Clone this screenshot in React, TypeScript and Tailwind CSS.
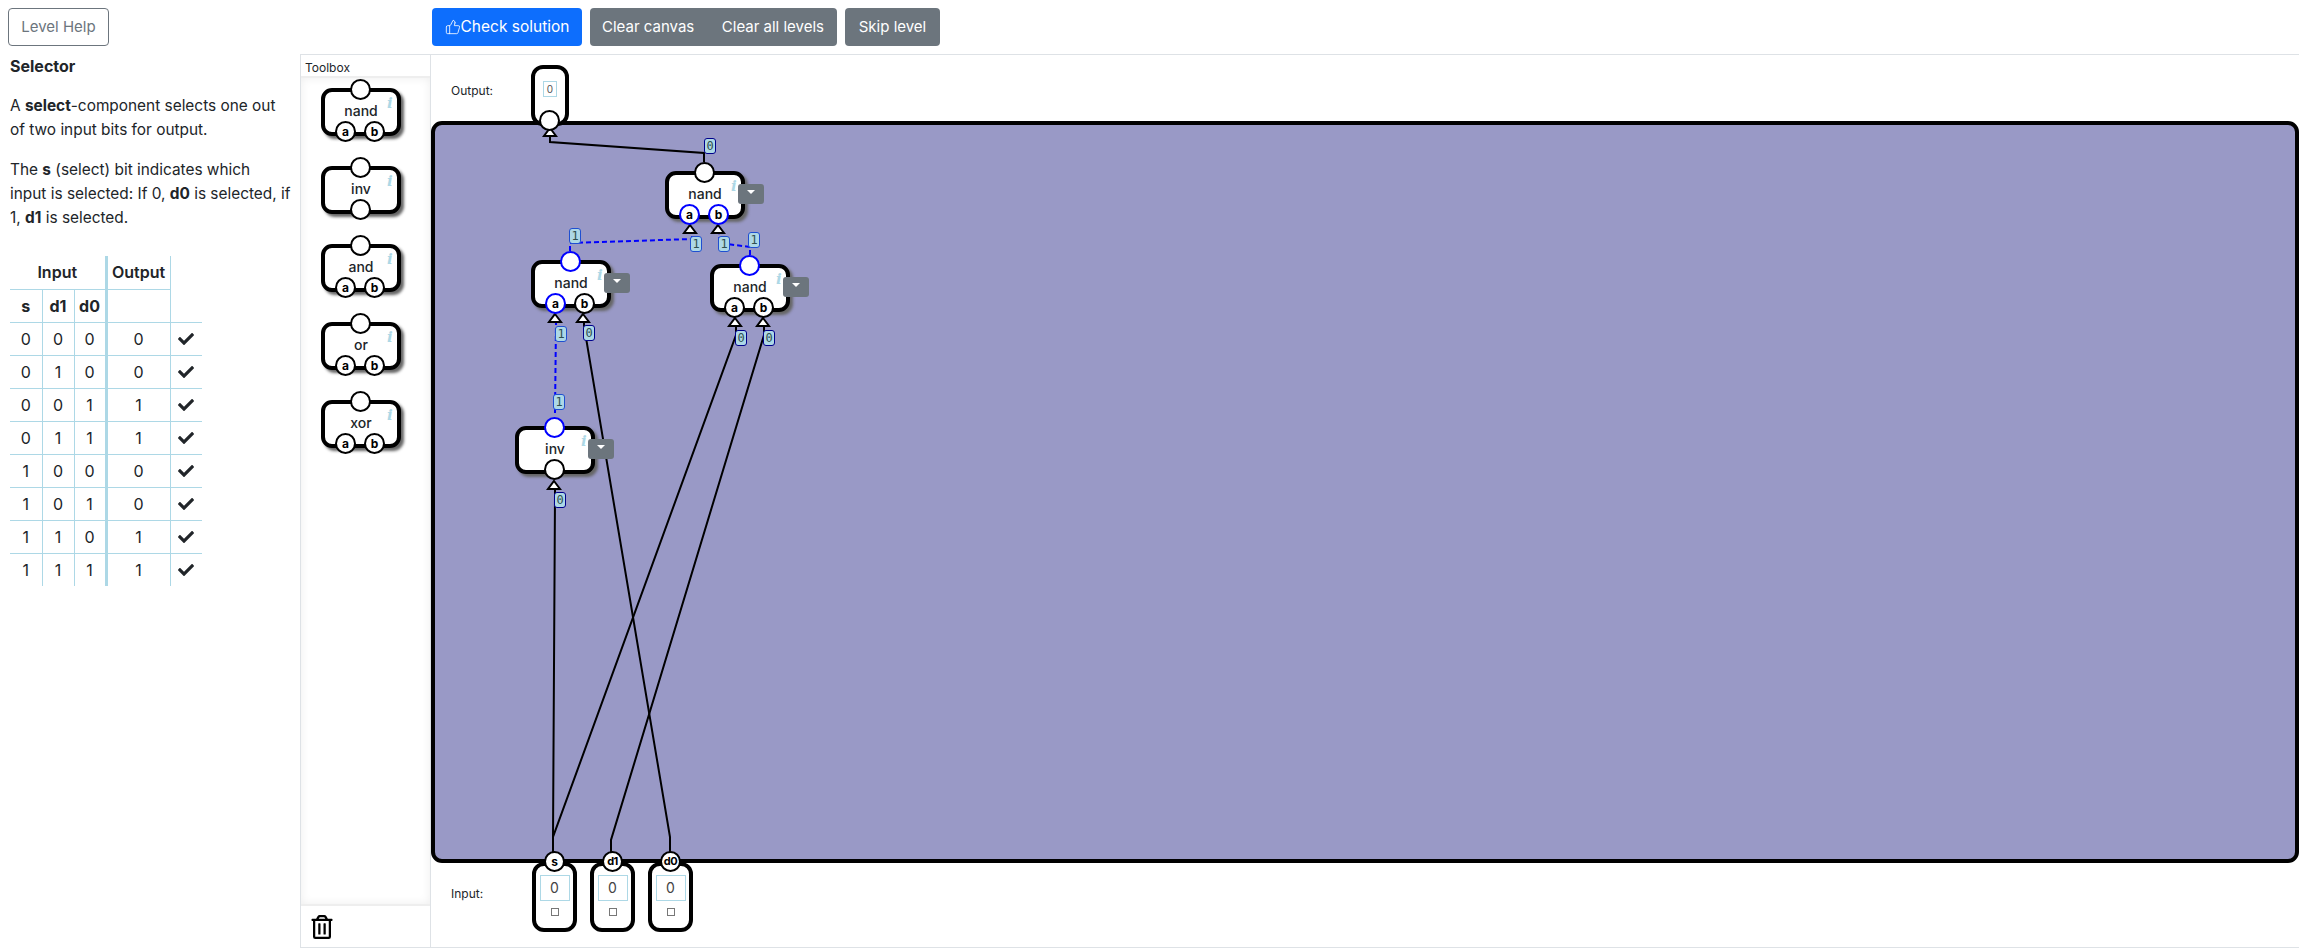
import React from "react";
import { ThumbsUp } from "lucide-react";
import { FaCheck, FaRegTrashAlt } from "react-icons/fa";

const lines = "border-[#add8e6]";

function Pin({ name, pos, on }: { name?: string; pos: string; on?: boolean }) {
  return (
    <div
      className={`absolute ${pos} flex h-[21px] w-[21px] items-center justify-center rounded-full border-2 bg-white font-bold leading-none text-black ${
        name && name.length > 1 ? "text-[11px] tracking-tighter" : "text-[12px]"
      } ${on ? "border-[#0000ff]" : "border-black"}`}
    >
      {name}
    </div>
  );
}

type NodeProps = {
  name: string;
  pos?: string;
  menu?: boolean;
  out?: boolean;
  a?: boolean;
  b?: boolean;
  inp?: boolean;
};

function Gate({ name, pos = "relative", menu, out, a, b, inp }: NodeProps) {
  const unary = name === "inv";
  return (
    <div
      className={`${pos} z-20 flex h-[48px] w-[80px] shrink-0 items-center justify-center rounded-[11px] border-4 border-black bg-white pb-[2px] text-[14px] font-medium text-[#212529] shadow-[3px_3px_3px_#666]`}
    >
      {name}
      <span className="absolute left-[62px] top-[1px] font-['DejaVu_Serif',serif] text-[15px] font-bold italic leading-[20px] text-[#add8e6]">
        i
      </span>
      <Pin pos="left-[25px] -top-[13px]" on={out} />
      {unary ? (
        <Pin pos="left-[25px] top-[29px]" on={inp} />
      ) : (
        <>
          <Pin name="a" pos="left-[10px] top-[29px]" on={a} />
          <Pin name="b" pos="left-[39px] top-[29px]" on={b} />
        </>
      )}
      {menu && (
        <div className="absolute left-[69px] top-[9px] flex h-[20px] w-[26px] items-start justify-center rounded-[3px] bg-[#6c757d] pt-[6px]">
          <div className="h-0 w-0 border-x-[4px] border-t-[4px] border-x-transparent border-t-white" />
        </div>
      )}
    </div>
  );
}

function Bit({ v, pos }: { v: string; pos: string }) {
  return (
    <span
      className={`absolute ${pos} z-30 flex h-[16px] w-[12px] items-center justify-center rounded-[3px] border bg-[#add8e6] font-['DejaVu_Sans_Mono',monospace] text-[12px] leading-none text-[#2f4f4f] ${
        v === "0" ? "border-[#00008b]" : "border-[#1f4fd0]"
      }`}
    >
      {v}
    </span>
  );
}

function InputBox({ name, pos }: { name: string; pos: string }) {
  return (
    <div
      className={`absolute ${pos} z-20 flex h-[70px] w-[45px] flex-col items-center rounded-[12px] border-4 border-black bg-white pt-[9px]`}
    >
      <div className="flex h-[26px] w-[30px] shrink-0 items-center justify-center border border-[#add8e6] text-[14px] leading-none text-[#444]">
        0
      </div>
      <div className="mt-[7px] h-[8px] w-[8px] border border-[#777] bg-white" />
      <Pin name={name} pos="left-[8px] -top-[15px]" />
    </div>
  );
}

function Tri({ x, y }: { x: number; y: number }) {
  return (
    <polygon
      points={`${x},${y} ${x + 6},${y + 8} ${x - 6},${y + 8}`}
      fill="white"
      stroke="black"
      strokeWidth="2"
    />
  );
}

const rows = [
  ["0", "0", "0", "0"],
  ["0", "1", "0", "0"],
  ["0", "0", "1", "1"],
  ["0", "1", "1", "1"],
  ["1", "0", "0", "0"],
  ["1", "0", "1", "0"],
  ["1", "1", "0", "1"],
  ["1", "1", "1", "1"],
];

function Wires() {
  const black = "fill-none stroke-black stroke-2";
  const blue = "fill-none stroke-[#0000ff] stroke-2 [stroke-dasharray:5_3]";
  return (
    <svg
      className="absolute inset-0 z-10 h-full w-full"
      viewBox="431 55 1868 892"
      preserveAspectRatio="xMinYMin slice"
    >
      <polyline className={black} points="704,162 704,153 550,142 550,132" />
      <polyline className={black} points="670,855 670,837 584,326 584,322" />
      <polyline className={black} points="553,855 553,837 736,335 736,325" />
      <polyline className={black} points="611,855 611,840 764,335 764,325" />
      <polyline className={black} points="553,855 553,837 555,495 555,488" />
      <polyline className={blue} points="570,251 570,243 692,239 692,233" />
      <polyline className={blue} points="750,255 750,247 719,243 719,233" />
      <polyline className={blue} points="555,413 556,323" />
      <Tri x={550} y={128} />
      <Tri x={690} y={225} />
      <Tri x={718} y={225} />
      <Tri x={555} y={314} />
      <Tri x={583} y={314} />
      <Tri x={735} y={318} />
      <Tri x={763} y={318} />
      <Tri x={554} y={481} />
    </svg>
  );
}

export default function App() {
  return (
    <div className="flex h-[948px] w-[2299px] flex-col overflow-hidden bg-white font-['Inter',sans-serif] text-[16px] leading-[24px] text-[#212529]">
      <header className="flex h-[54px] shrink-0 items-start pl-2 pt-2 text-[15px]">
        <button className="h-[38px] w-[101px] rounded-[4px] border border-[#6c757d] text-[#6c757d]">
          Level Help
        </button>
        <button className="ml-[323px] flex h-[38px] w-[150px] items-center justify-center rounded-[4px] bg-[#0d6efd] text-[15.5px] text-white">
          <ThumbsUp size={16} strokeWidth={1.25} />
          Check solution
        </button>
        <div className="ml-2 flex h-[38px] w-[247px] items-center justify-between rounded-[4px] bg-[#6c757d] pl-3 pr-[13px] text-white">
          <button>Clear canvas</button>
          <button>Clear all levels</button>
        </div>
        <button className="ml-2 h-[38px] w-[95px] rounded-[4px] bg-[#6c757d] text-white">
          Skip level
        </button>
      </header>

      <main className="flex min-h-0 flex-1">
        <aside className="w-[300px] shrink-0 pl-[10px] pr-[6px]">
          <h1 className="mb-4 font-bold">Selector</h1>
          <p className="mb-4 text-[15.4px]">
            A <b>select</b>-component selects one out
            <br />
            of two input bits for output.
          </p>
          <p className="mb-[26px] text-[15.4px]">
            The <b>s</b> (select) bit indicates which
            <br />
            input is selected: If 0, <b>d0</b> is selected, if
            <br />
            1, <b>d1</b> is selected.
          </p>
          <table className="w-[192px] table-fixed text-center">
            <colgroup>
              <col className="w-[32px]" />
              <col className="w-[32px]" />
              <col className="w-[32px]" />
              <col className="w-[64px]" />
              <col className="w-[32px]" />
            </colgroup>
            <thead>
              <tr className="h-[33px]">
                <th colSpan={3} className={`border-r-[3px] border-b p-0 font-semibold ${lines}`}>
                  Input
                </th>
                <th className={`border-r border-b p-0 font-semibold ${lines}`}>Output</th>
                <th className="p-0" />
              </tr>
              <tr className="h-[33px]">
                <th className={`border-r border-b p-0 font-bold ${lines}`}>s</th>
                <th className={`border-r border-b p-0 font-bold ${lines}`}>d1</th>
                <th className={`border-r-[3px] border-b p-0 font-bold ${lines}`}>d0</th>
                <th className={`border-r border-b p-0 ${lines}`} />
                <th className={`border-b p-0 ${lines}`} />
              </tr>
            </thead>
            <tbody>
              {rows.map((r, i) => {
                const edge = i < rows.length - 1 ? "border-b" : "";
                return (
                  <tr key={i} className="h-[33px]">
                    <td className={`border-r p-0 ${edge} ${lines}`}>{r[0]}</td>
                    <td className={`border-r p-0 ${edge} ${lines}`}>{r[1]}</td>
                    <td className={`border-r-[3px] p-0 ${edge} ${lines}`}>{r[2]}</td>
                    <td className={`border-r p-0 ${edge} ${lines}`}>{r[3]}</td>
                    <td className={`p-0 ${edge} ${lines}`}>
                      <FaCheck className="mx-auto" size={16} />
                    </td>
                  </tr>
                );
              })}
            </tbody>
          </table>
        </aside>

        <div className="flex min-w-0 flex-1 border-y border-[#dee2e6]">
          <section className="flex w-[131px] shrink-0 flex-col border-x border-[#dee2e6]">
            <div className="h-[23px] shrink-0 border-b-2 border-[#eeeeee] pl-[4px] text-[12px] leading-[26px]">
              Toolbox
            </div>
            <div className="flex min-h-0 flex-1 flex-col gap-[30px] pl-[20px] pt-[10px] shadow-[inset_0_0_10px_rgba(0,0,0,0.07)]">
              <Gate name="nand" />
              <Gate name="inv" />
              <Gate name="and" />
              <Gate name="or" />
              <Gate name="xor" />
            </div>
            <div className="h-[43px] shrink-0 border-t-2 border-[#eeeeee] pl-[9px] pt-[9px] text-black">
              <FaRegTrashAlt size={24} />
            </div>
          </section>

          <section className="relative flex min-w-0 flex-1 flex-col">
            <div className="h-[66px] shrink-0" />
            <div className="h-[742px] shrink-0 rounded-[11px] border-4 border-black bg-[#9999c6]" />
            <Wires />

            <span className="absolute left-[20px] top-[28px] text-[12px] leading-[16px]">Output:</span>
            <div className="absolute left-[100px] top-[10px] z-[5] h-[61px] w-[38px] rounded-[12px] border-4 border-black bg-white">
              <div className="ml-[8px] mt-[12px] flex h-[16px] w-[14px] items-center justify-center border border-[#add8e6] text-[10px] leading-none text-[#555]">
                0
              </div>
            </div>
            <div className="absolute left-[108px] top-[55px] z-20 h-[21px] w-[21px] rounded-full border-2 border-black bg-white" />

            <Gate name="nand" pos="absolute left-[234px] top-[116px]" menu a b />
            <Gate name="nand" pos="absolute left-[100px] top-[205px]" menu out a />
            <Gate name="nand" pos="absolute left-[279px] top-[209px]" menu out />
            <Gate name="inv" pos="absolute left-[84px] top-[371px]" menu out />

            <Bit v="0" pos="left-[273px] top-[83px]" />
            <Bit v="1" pos="left-[138px] top-[173px]" />
            <Bit v="1" pos="left-[259px] top-[181px]" />
            <Bit v="1" pos="left-[317px] top-[177px]" />
            <Bit v="1" pos="left-[287px] top-[181px]" />
            <Bit v="1" pos="left-[124px] top-[271px]" />
            <Bit v="1" pos="left-[122px] top-[339px]" />
            <Bit v="0" pos="left-[152px] top-[270px]" />
            <Bit v="0" pos="left-[304px] top-[275px]" />
            <Bit v="0" pos="left-[332px] top-[275px]" />
            <Bit v="0" pos="left-[123px] top-[437px]" />

            <span className="absolute left-[20px] top-[831px] text-[12px] leading-[16px]">Input:</span>
            <InputBox name="s" pos="left-[101px] top-[807px]" />
            <InputBox name="d1" pos="left-[159px] top-[807px]" />
            <InputBox name="d0" pos="left-[217px] top-[807px]" />
          </section>
        </div>
      </main>
    </div>
  );
}
